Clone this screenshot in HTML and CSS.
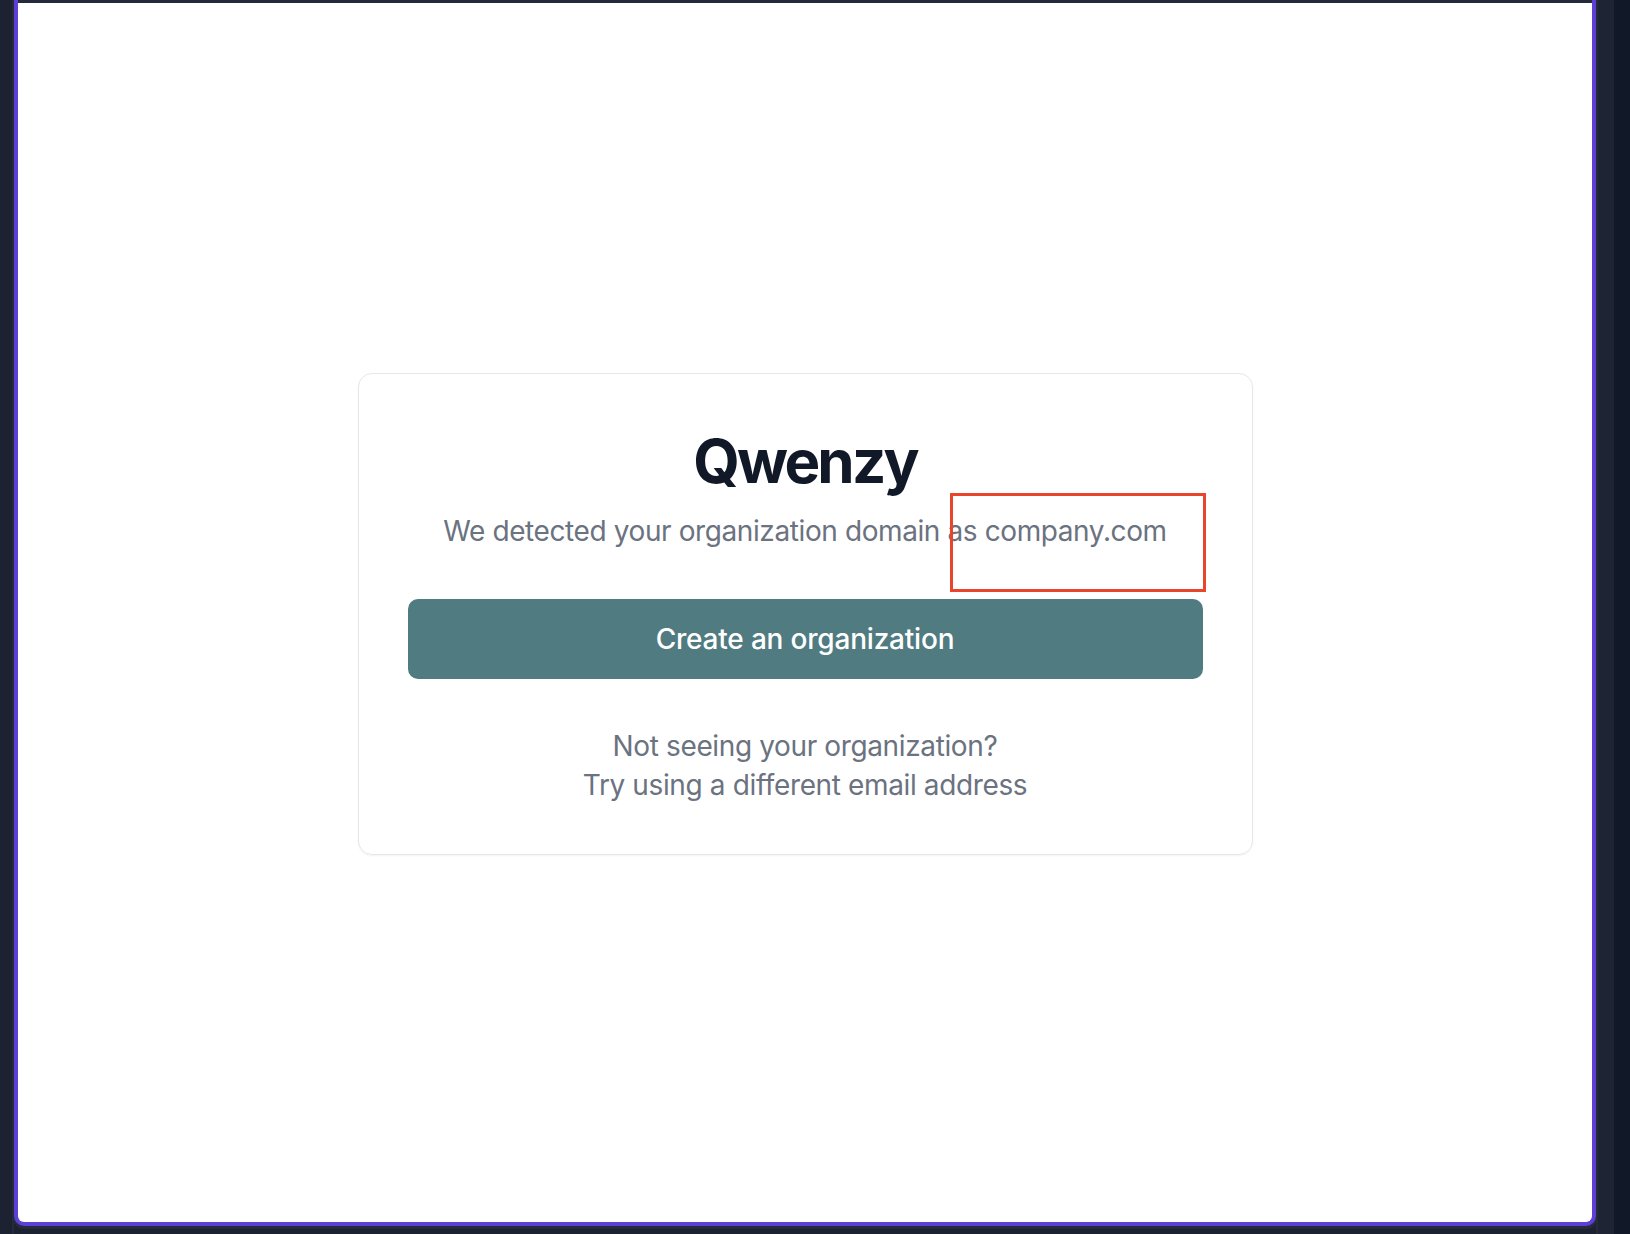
FILE: index.html
```html
<!DOCTYPE html>
<html lang="en">
<head>
<meta charset="utf-8">
<title>Qwenzy</title>
<link rel="stylesheet" href="styles.css">
</head>
<body>
<div class="gutter"></div>
<div class="panel">
  <div class="topbar"></div>
  <main class="stage">
    <section class="card">
      <h1 class="title">Qwenzy</h1>
      <p class="subtitle">We detected your organization domain as company.com</p>
      <button class="primary" type="button">Create an organization</button>
      <p class="help">Not seeing your organization?<br>Try using a different email address</p>
      <div class="highlight"></div>
    </section>
  </main>
</div>
<div class="side side-a"></div>
<div class="side side-b"></div>
</body>
</html>
```

FILE: styles.css
```css
html, body {
  margin: 0;
  padding: 0;
}
body {
  width: 1630px;
  height: 1234px;
  overflow: hidden;
  display: flex;
  align-items: flex-start;
  background: #1c2232;
  font-family: Inter, "Noto Sans", sans-serif;
}
.gutter {
  width: 12px;
  height: 1234px;
  flex: none;
  border-right: 2px solid #262b3b;
  background: #1c2232;
}
.panel {
  width: 1574px;
  height: 1222px;
  flex: none;
  display: flex;
  flex-direction: column;
  background: #ffffff;
  border: 4px solid #5b3fd6;
  border-top: 0;
  border-radius: 0 0 10px 10px;
  box-shadow: 0 2px 0 1px #262b3b;
}
.topbar {
  height: 3px;
  flex: none;
  background: #242939;
}
.stage {
  flex: 1;
  display: flex;
  align-items: center;
  justify-content: center;
}
.card {
  position: relative;
  box-sizing: border-box;
  width: 895px;
  padding: 57px 49px 48px;
  border: 1px solid #e5e7eb;
  border-radius: 14px;
  box-shadow: 0 1px 2px rgba(0, 0, 0, 0.05);
  display: flex;
  flex-direction: column;
  align-items: stretch;
  text-align: center;
  margin-top: 2px;
}
.title {
  margin: 0;
  font-size: 60px;
  line-height: 60px;
  font-weight: 700;
  color: #111827;
  letter-spacing: -2.8px;
}
.subtitle {
  margin: 20px 0 0;
  font-size: 28px;
  line-height: 40px;
  color: #6b7280;
  letter-spacing: -0.4px;
}
.primary {
  margin-top: 48px;
  height: 80px;
  border: 0;
  border-radius: 10px;
  background: #507b81;
  color: #ffffff;
  font-family: inherit;
  font-size: 28px;
  line-height: 40px;
  font-weight: 500;
  letter-spacing: -0.2px;
  cursor: pointer;
}
.help {
  margin: 48px 0 0;
  font-size: 28px;
  line-height: 39.5px;
  color: #6b7280;
  letter-spacing: -0.37px;
}
.highlight {
  position: absolute;
  left: 591px;
  top: 119px;
  width: 256px;
  height: 99px;
  box-sizing: border-box;
  border: 3px solid #e8452c;
}
.side {
  height: 1234px;
  flex: none;
}
.side-a {
  width: 16px;
  border-left: 2px solid #262b3b;
  background: #1f2434;
}
.side-b {
  width: 16px;
  background: #111827;
}
```
